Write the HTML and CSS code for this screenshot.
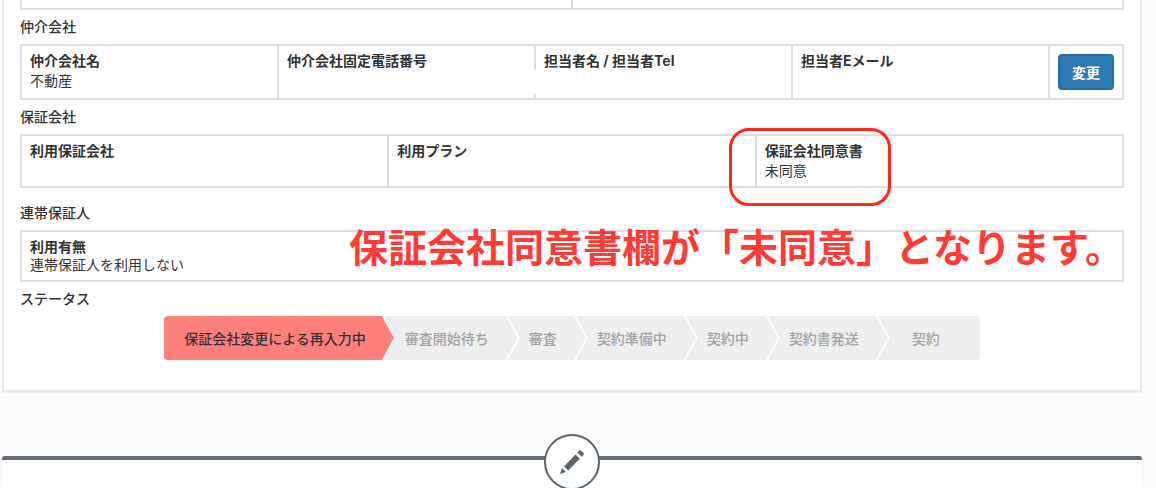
FILE: index.html
```html
<!DOCTYPE html>
<html lang="ja">
<head>
    <meta charset="UTF-8">
    <meta name="viewport" content="width=device-width, initial-scale=1.0">
    <title>申込詳細</title>
    <link rel="stylesheet" href="styles.css">
</head>
<body>
    <main class="panel">
        <table class="info-table info-table-top">
            <tr>
                <td></td>
                <td></td>
            </tr>
        </table>

        <h2 class="section-title">仲介会社</h2>
        <table class="info-table">
            <tr>
                <td><strong>仲介会社名</strong><span>不動産</span></td>
                <td class="masked"><strong>仲介会社固定電話番号</strong></td>
                <td><strong>担当者名 / 担当者Tel</strong></td>
                <td><strong>担当者Eメール</strong></td>
                <td class="action"><button type="button" class="btn">変更</button></td>
            </tr>
        </table>

        <h2 class="section-title">保証会社</h2>
        <table class="info-table guarantee">
            <tr>
                <td><strong>利用保証会社</strong></td>
                <td><strong>利用プラン</strong></td>
                <td>
                    <strong>保証会社同意書</strong><span>未同意</span>
                    <div class="callout"></div>
                </td>
            </tr>
        </table>

        <h2 class="section-title">連帯保証人</h2>
        <div class="guarantor">
            <table class="info-table compact">
                <tr>
                    <td><strong>利用有無</strong><span>連帯保証人を利用しない</span></td>
                </tr>
            </table>
            <p class="note">保証会社同意書欄が「未同意」となります。</p>
        </div>

        <h2 class="section-title">ステータス</h2>
        <ol class="steps">
            <li class="active">保証会社変更による再入力中</li>
            <li>審査開始待ち</li>
            <li>審査</li>
            <li>契約準備中</li>
            <li>契約中</li>
            <li>契約書発送</li>
            <li>契約</li>
        </ol>
    </main>

    <section class="edit-panel">
        <div class="edit-icon">
            <svg width="24" height="24" viewBox="0 0 24 24" fill="currentColor" aria-hidden="true">
                <path d="M0 24L2 18L6 22Z"/>
                <path d="M4 16.5L15.5 4.4L19.8 8.7L8.2 20.4Z"/>
                <path d="M17.4 2.6L19.4 0.6Q20.2 -0.1 21 0.6L23.6 3.2Q24.3 4 23.6 4.8L21.6 6.8Z"/>
            </svg>
        </div>
    </section>
</body>
</html>
```
FILE: styles.css
```css
* {
    box-sizing: border-box;
}
body {
    display: flex;
    flex-direction: column;
    height: 100vh;
    margin: 0;
    padding: 0 14px 0 2px;
    overflow: hidden;
    background-color: #fcfcfc;
    color: #333;
    font-family: Inter, "Noto Sans CJK JP", sans-serif;
    font-size: 14px;
    line-height: 20px;
}
.panel {
    flex: none;
    padding: 0 16px 30px;
    background-color: #fff;
    border: 2px solid #e6e9ed;
    border-top: none;
    box-shadow: 0 1px 1px rgba(0, 0, 0, 0.05);
}
.section-title {
    margin: 0;
    font-size: 14px;
    font-weight: 500;
    line-height: 34px;
}

/* 情報テーブル */
.info-table {
    width: 100%;
    table-layout: fixed;
    border-collapse: collapse;
}
.info-table td {
    position: relative;
    height: 52px;
    padding: 5px 8px;
    border: 2px solid #ddd;
    vertical-align: top;
}
.info-table strong,
.info-table span {
    display: block;
}
.info-table-top td {
    height: 9px;
    padding: 0;
    border-top: none;
}
.info-table .action {
    width: 74px;
    padding: 8px;
}
.masked::after {
    content: "";
    position: absolute;
    right: -2px;
    bottom: 4px;
    width: 100px;
    height: 25px;
    background-color: #fff;
}
.guarantee {
    margin-bottom: 8px;
}
.compact td {
    height: 50px;
    padding: 6px 8px;
    line-height: 18px;
}
.btn {
    display: block;
    width: 100%;
    height: 36px;
    padding: 0;
    background-color: #2c7ab5;
    color: #fff;
    border: 2px solid #276da3;
    border-radius: 4px;
    font-family: inherit;
    font-size: 14px;
    font-weight: 700;
    cursor: pointer;
}
.callout {
    position: absolute;
    top: -8px;
    left: -28px;
    width: 162px;
    height: 78px;
    border: 3px solid #ff2816;
    border-radius: 20px;
}
.guarantor {
    position: relative;
}
.note {
    position: absolute;
    top: 0;
    right: 0;
    margin: 0;
    color: #ff3b35;
    font-size: 39px;
    font-weight: 700;
    line-height: 36px;
    white-space: nowrap;
}

/* ステータス */
.steps {
    display: flex;
    justify-content: center;
    margin: 0;
    padding: 0;
    list-style: none;
}
.steps li {
    position: relative;
    padding: 0 17px 0 23px;
    background-color: #eee;
    color: #a3a3a3;
    font-weight: 500;
    line-height: 46px;
    height: 44px;
    white-space: nowrap;
}
.steps li::before,
.steps li::after {
    content: "";
    position: absolute;
    z-index: 1;
    top: 0;
    left: 100%;
    width: 12px;
    height: 100%;
    background-color: #eee;
    clip-path: polygon(0 0, 100% 50%, 0 100%);
}
.steps li::before {
    width: 14px;
    background-color: #fff;
    clip-path: polygon(0 0, 2px 0, 100% 50%, 2px 100%, 0 100%);
}
.steps .active {
    padding: 0 16px 0 20px;
    color: #333;
    border-radius: 4px 0 0 4px;
}
.steps .active,
.steps .active::after {
    background-color: #ff7f7a;
}
.steps li:last-child {
    width: 104px;
    padding: 0 40px 0 36px;
    border-radius: 0 4px 4px 0;
}
.steps li:last-child::before,
.steps li:last-child::after {
    display: none;
}

/* 編集パネル */
.edit-panel {
    position: relative;
    flex: 1;
    margin-top: 64px;
    background-color: #fff;
    border-top: 4px solid #646b7b;
    border-radius: 3px 3px 0 0;
    box-shadow: 0 2px 4px rgba(0, 0, 0, 0.08);
}
.edit-icon {
    display: flex;
    align-items: center;
    justify-content: center;
    position: absolute;
    top: -32px;
    margin-top: 6px;
    left: calc(50% - 28px);
    width: 56px;
    height: 56px;
    background-color: #fff;
    color: #5a646e;
    border: 2px solid #5a646e;
    border-radius: 50%;
}
.edit-icon svg {
    overflow: visible;
}
```
